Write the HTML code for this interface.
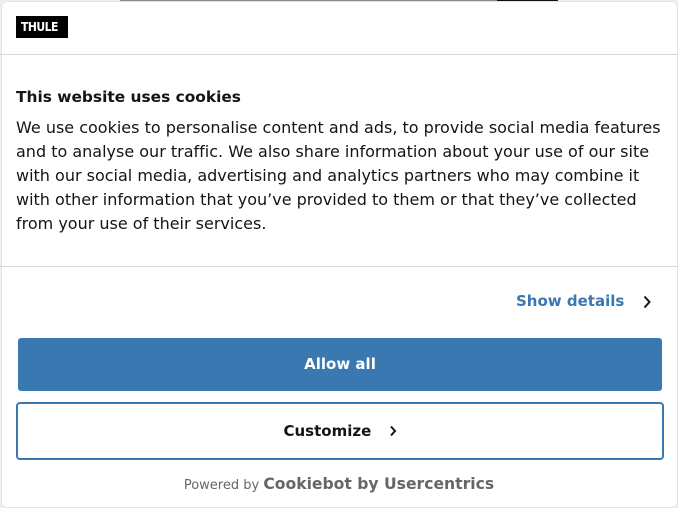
<!DOCTYPE html>
<html><head><meta charset="utf-8"><style>
*{box-sizing:border-box;margin:0;padding:0}
html,body{width:678px;height:508px;overflow:hidden;background:#f0f0f0;font-family:"DejaVu Sans",sans-serif}
.topline{position:absolute;left:120px;top:0;width:438px;height:1px;background:#8a8a8a}
.topline2{position:absolute;left:497px;top:0;width:61px;height:1px;background:#111}
.d{position:absolute;left:1px;top:1px;width:677px;height:507px;background:#fff;border-radius:6px;border:1px solid #e4e4e4}
.logo{position:absolute;left:16px;top:16px;width:52px;height:22px;background:#000;color:#fff;font:bold 12px "DejaVu Sans Condensed","DejaVu Sans",sans-serif;line-height:22px;padding-left:5px;letter-spacing:-0.5px}
.hr{position:absolute;left:0;width:678px;height:1px;background:#d6d6d6}
h1{position:absolute;left:16px;top:88px;font-size:15.4px;font-weight:bold;color:#141414}
p{position:absolute;left:16px;top:116px;width:652px;font-size:16px;line-height:24px;color:#141414;font-variant-ligatures:none}
.sd{position:absolute;left:516px;top:292px;font-size:15px;font-weight:bold;color:#3a78b1}
.chev{position:absolute}
.allow{position:absolute;left:18px;top:338px;width:644px;height:53px;background:#3a78b1;border-radius:3px;color:#fff;font-weight:bold;font-size:15px;text-align:center;line-height:53px}
.cust{position:absolute;left:16px;top:402px;width:648px;height:58px;border:2px solid #3a78b1;border-radius:4px;color:#141414;font-weight:bold;font-size:15px;text-align:center;line-height:55px}
.pw{position:absolute;left:0;width:678px;top:475px;text-align:center;color:#666;font-size:13px}
.pw b{font-size:15.6px;color:#666}
</style></head><body>
<div class="topline"></div><div class="topline2"></div>
<div class="d"></div>
<div class="logo">THULE</div>
<div class="hr" style="top:54px"></div>
<h1>This website uses cookies</h1>
<p>We use cookies to personalise content and ads, to provide social media features and to analyse our traffic. We also share information about your use of our site with our social media, advertising and analytics partners who may combine it with other information that you’ve provided to them or that they’ve collected from your use of their services.</p>
<div class="hr" style="top:266px"></div>
<div class="sd">Show details</div>
<svg class="chev" style="left:642px;top:295px" width="10" height="14" viewBox="0 0 10 14"><path d="M2.5 1.5l5 5.5-5 5.5" fill="none" stroke="#141414" stroke-width="2"/></svg>
<div class="allow">Allow all</div>
<div class="cust">Customize <svg style="vertical-align:-1px;margin-left:12px" width="8" height="12" viewBox="0 0 8 12"><path d="M2 1.5l4 4.5-4 4.5" fill="none" stroke="#141414" stroke-width="2"/></svg></div>
<div class="pw">Powered by <b>Cookiebot by Usercentrics</b></div>
</body></html>
